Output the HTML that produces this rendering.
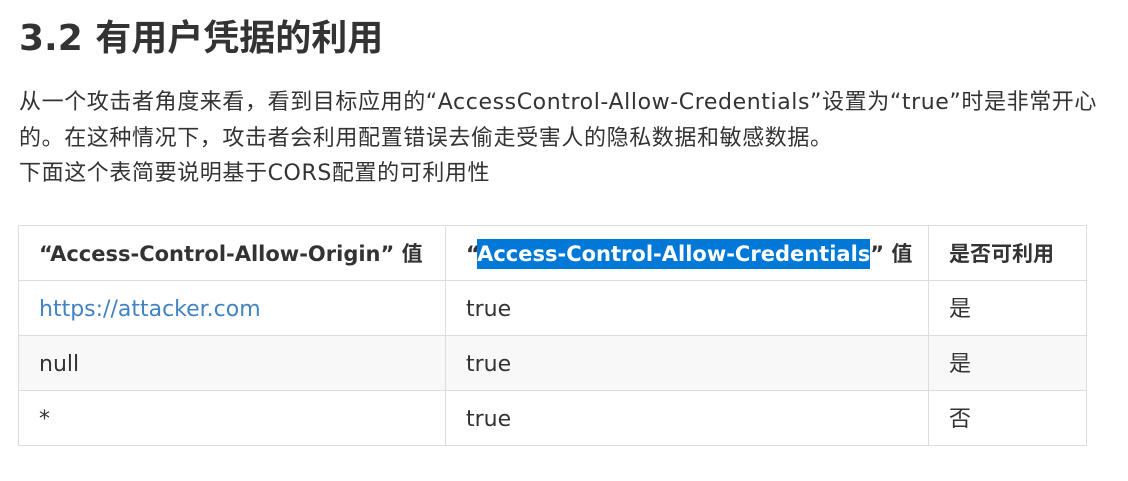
<!DOCTYPE html>
<html><head><meta charset="utf-8"><style>
body{margin:0;background:#fff;color:#333;font-family:"DejaVu Sans","Noto Sans CJK SC",sans-serif;width:1128px;height:481px;overflow:hidden}
h2{position:absolute;left:19px;top:17px;margin:0;font-size:36px;font-weight:bold;line-height:44px;color:#333}
p{position:absolute;left:19px;top:85px;margin:0;font-size:22px;line-height:35.5px;width:1100px;white-space:nowrap;letter-spacing:0.6px}
table{position:absolute;left:18px;top:225px;width:1068px;border-collapse:collapse;font-size:22px;table-layout:fixed}
td,th{border:1px solid #ddd;height:55px;padding:3px 20px 0;text-align:left;box-sizing:border-box;line-height:26px;vertical-align:middle;white-space:nowrap;overflow:visible}
th{font-weight:bold;font-size:21px;padding-top:1px}
tr.alt td{background:#f8f8f8}
.sel{background:#0078d7;color:#fff;padding:3px 0}
a{color:#4183c4;text-decoration:none}
</style></head><body>
<h2>3.2 有用户凭据的利用</h2>
<p>从一个攻击者角度来看，看到目标应用的“AccessControl-Allow-Credentials”设置为“true”时是非常开心<br>的。在这种情况下，攻击者会利用配置错误去偷走受害人的隐私数据和敏感数据。<br>下面这个表简要说明基于CORS配置的可利用性</p>
<table>
<colgroup><col style="width:427px"><col style="width:483px"><col style="width:158px"></colgroup>
<tr><th>“Access-Control-Allow-Origin” 值</th><th>“<span class="sel">Access-Control-Allow-Credentials</span>” 值</th><th>是否可利用</th></tr>
<tr><td><a>https://attacker.com</a></td><td>true</td><td>是</td></tr>
<tr class="alt"><td>null</td><td>true</td><td>是</td></tr>
<tr><td>*</td><td>true</td><td>否</td></tr>
</table>
</body></html>
